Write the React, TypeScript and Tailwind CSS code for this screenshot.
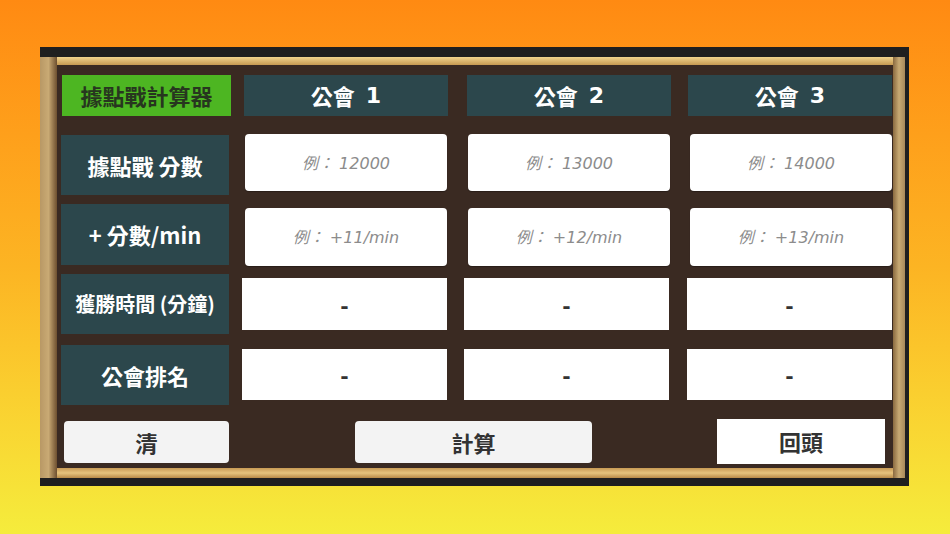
import React from "react";

const cjk = { fontFamily: '"Noto Sans CJK TC", "Noto Sans", sans-serif' };
const wide = { fontFamily: '"DejaVu Sans", "Noto Sans CJK TC", sans-serif' };

const guilds = [
  { name: "公會", num: "1", score: "例： 12000", rate: "例： +11/min" },
  { name: "公會", num: "2", score: "例： 13000", rate: "例： +12/min" },
  { name: "公會", num: "3", score: "例： 14000", rate: "例： +13/min" },
];

function Label({ children, h, size = "text-[22px]" }: { children: React.ReactNode; h: string; size?: string }) {
  return (
    <div className={`ml-[4px] w-[168px] ${h} bg-[#2c474c] flex items-center justify-center text-white font-bold ${size}`}>
      {children}
    </div>
  );
}

function Input({ text, h, ml }: { text: string; h: string; ml: string }) {
  return (
    <div
      style={wide}
      className={`${ml} w-[202px] ${h} bg-white rounded-[4px] flex items-center justify-center pt-[2px] text-[16px] italic text-[#8c8c8c] shadow-[0_1px_1px_rgba(0,0,0,0.3)]`}
    >
      {text}
    </div>
  );
}

function Result({ h, ml }: { h: string; ml: string }) {
  return (
    <div className={`${ml} mt-[4px] w-[205px] ${h} bg-white flex items-center justify-center text-[22px] font-black text-[#333]`}>
      -
    </div>
  );
}

export default function App() {
  return (
    <div
      style={cjk}
      className="w-full h-[534px] bg-gradient-to-b from-[#ff8a12] via-[#fcb423] to-[#f5ec3c] pt-[47px] pl-[40px]"
    >
      <div className="w-[869px] h-[439px] flex flex-col bg-[#1f1f1f]">
        <div className="h-[10px]" />
        <div className="flex flex-1">
          {/* left post */}
          <div className="w-[17px] bg-gradient-to-r from-[#b89865] via-[#c9aa74] to-[#6e5030]" />
          <div className="flex-1 flex flex-col">
            <div className="h-[8px] bg-gradient-to-b from-[#f2d58e] to-[#c79a52]" />
            <div className="flex-1 bg-[#3a2a22] flex flex-col">
              {/* header */}
              <div className="flex mt-[10px] h-[41px]">
                <div className="ml-[5px] w-[169px] bg-[#4db622] flex items-center justify-center text-[22px] font-bold text-[#27361f]">
                  據點戰計算器
                </div>
                {guilds.map((g, i) => (
                  <div
                    key={g.num}
                    className={`${i === 0 ? "ml-[13px]" : i === 1 ? "ml-[19px]" : "ml-[17px]"} w-[204px] bg-[#2c474c] flex items-center justify-center gap-[11px] text-white font-bold text-[22px]`}
                  >
                    <span>{g.name}</span>
                    <span style={wide} className="font-bold text-[22px]">{g.num}</span>
                  </div>
                ))}
              </div>

              {/* score row */}
              <div className="flex items-start mt-[18px] h-[61px]">
                <div className="mt-[1px]">
                  <Label h="h-[60px]">據點戰 分數</Label>
                </div>
                <Input text={guilds[0].score} h="h-[57px]" ml="ml-[16px]" />
                <Input text={guilds[1].score} h="h-[57px]" ml="ml-[21px]" />
                <Input text={guilds[2].score} h="h-[57px]" ml="ml-[20px]" />
              </div>

              {/* rate row */}
              <div className="flex items-start mt-[9px] h-[62px]">
                <Label h="h-[61px]">+ 分數/min</Label>
                <div className="mt-[4px] flex">
                  <Input text={guilds[0].rate} h="h-[58px]" ml="ml-[16px]" />
                  <Input text={guilds[1].rate} h="h-[58px]" ml="ml-[21px]" />
                  <Input text={guilds[2].rate} h="h-[58px]" ml="ml-[20px]" />
                </div>
              </div>

              {/* win time row */}
              <div className="flex items-start mt-[8px] h-[60px]">
                <Label h="h-[60px]" size="text-[20px]">獲勝時間 (分鐘)</Label>
                <Result h="h-[52px]" ml="ml-[13px]" />
                <Result h="h-[52px]" ml="ml-[17px]" />
                <Result h="h-[52px]" ml="ml-[18px]" />
              </div>

              {/* rank row */}
              <div className="flex items-start mt-[11px] h-[60px]">
                <Label h="h-[60px]">公會排名</Label>
                <Result h="h-[51px]" ml="ml-[13px]" />
                <Result h="h-[51px]" ml="ml-[17px]" />
                <Result h="h-[51px]" ml="ml-[18px]" />
              </div>

              {/* buttons */}
              <div className="flex items-start mt-[14px]">
                <button className="ml-[7px] mt-[2px] w-[165px] h-[42px] bg-[#f3f3f3] rounded-[4px] text-[22px] font-bold text-[#333]">
                  清
                </button>
                <button className="ml-[126px] mt-[2px] w-[237px] h-[42px] bg-[#f3f3f3] rounded-[4px] text-[22px] font-bold text-[#333]">
                  計算
                </button>
                <button className="ml-[125px] w-[168px] h-[45px] bg-white text-[22px] font-bold text-[#333]">
                  回頭
                </button>
              </div>
            </div>
            <div className="h-[10px] bg-gradient-to-b from-[#c89a55] via-[#e6c47e] to-[#b88a48]" />
          </div>
          {/* right post */}
          <div className="w-[12px] bg-gradient-to-r from-[#8a6a40] via-[#c8aa74] to-[#a8895a]" />
          <div className="w-[4px]" />
        </div>
        <div className="h-[8px]" />
      </div>
    </div>
  );
}
